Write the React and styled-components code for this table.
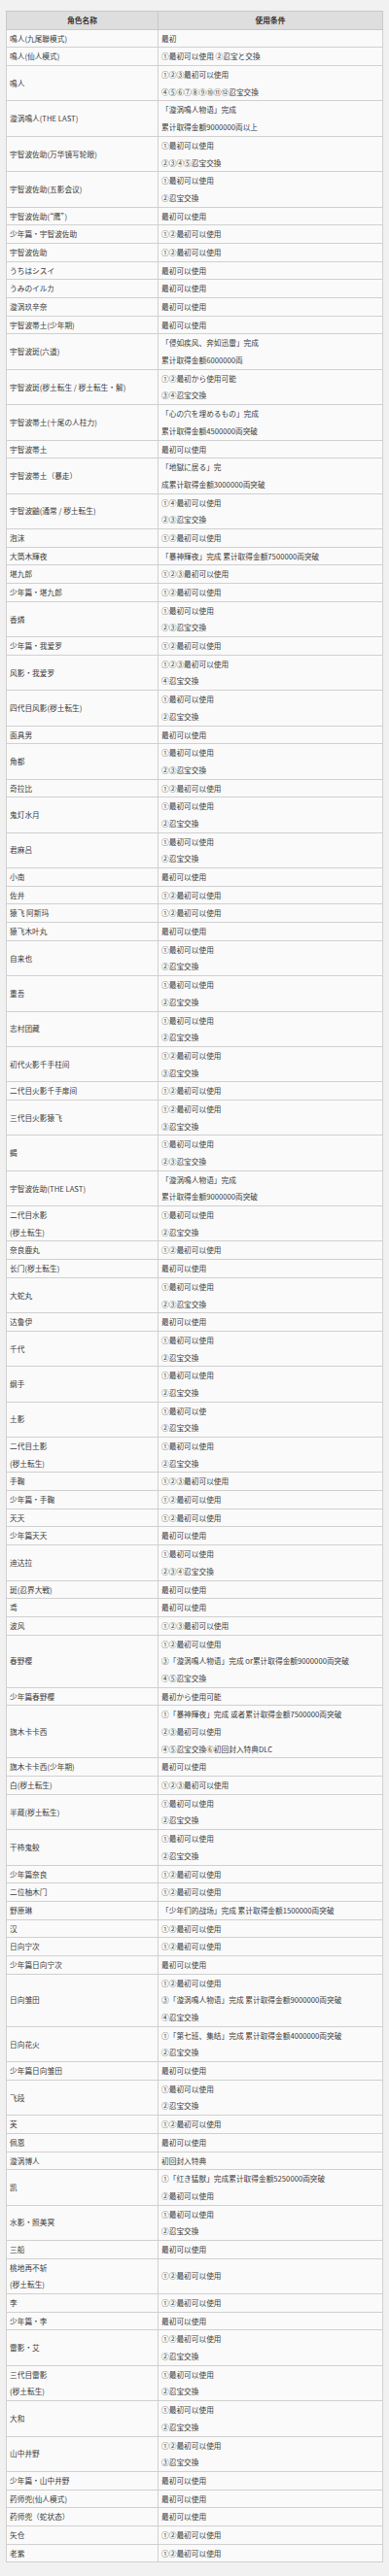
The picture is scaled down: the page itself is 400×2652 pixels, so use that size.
import React from "react";
import styled, { createGlobalStyle } from "styled-components";

const GlobalStyle = createGlobalStyle`
  body {
    margin: 0;
    background: #f1f1f1;
    font-family: "Noto Sans CJK SC", "Noto Sans", sans-serif;
  }
`;

// [角色名称, 使用条件] - "|" splits a cell into lines
const rows = [
  ["鳴人(九尾聯模式)", "最初"],
  ["鳴人(仙人模式)", "①最初可以使用 ②忍宝と交換"],
  ["鳴人", "①②③最初可以使用|④⑤⑥⑦⑧⑨⑩⑪⑫忍宝交換"],
  ["漩涡鳴人(THE LAST)", "「漩涡鳴人物语」完成|累计取得金额9000000両以上"],
  ["宇智波佐助(万华镜写轮眼)", "①最初可以使用|②③④⑤忍宝交換"],
  ["宇智波佐助(五影会议)", "①最初可以使用|②忍宝交換"],
  ["宇智波佐助(“鹰”)", "最初可以使用"],
  ["少年篇・宇智波佐助", "①②最初可以使用"],
  ["宇智波佐助", "①②最初可以使用"],
  ["うちはシスイ", "最初可以使用"],
  ["うみのイルカ", "最初可以使用"],
  ["漩涡玖辛奈", "最初可以使用"],
  ["宇智波帯土(少年期)", "最初可以使用"],
  ["宇智波斑(六道)", "「侵如疾风、奔如迅雷」完成|累计取得金额6000000両"],
  ["宇智波斑(秽土転生 / 秽土転生・解)", "①②最初から使用可能|③④忍宝交換"],
  ["宇智波帯土(十尾の人柱力)", "「心の穴を埋めるもの」完成|累计取得金额4500000両突破"],
  ["宇智波帯土", "最初可以使用"],
  ["宇智波帯土（暴走）", "「地獄に居る」完|成累计取得金额3000000両突破"],
  ["宇智波鼬(通常 / 秽土転生)", "①④最初可以使用|②③忍宝交換"],
  ["泡沫", "①②最初可以使用"],
  ["大筒木輝夜", "「暴神輝夜」完成 累计取得金额7500000両突破"],
  ["堪九郎", "①②③最初可以使用"],
  ["少年篇・堪九郎", "①②最初可以使用"],
  ["香燐", "①最初可以使用|②③忍宝交換"],
  ["少年篇・我爱罗", "①②最初可以使用"],
  ["风影・我爱罗", "①②③最初可以使用|④忍宝交換"],
  ["四代目风影(秽土転生)", "①最初可以使用|②忍宝交換"],
  ["面具男", "最初可以使用"],
  ["角都", "①最初可以使用|②③忍宝交換"],
  ["奇拉比", "①②最初可以使用"],
  ["鬼灯水月", "①最初可以使用|②忍宝交換"],
  ["君麻吕", "①最初可以使用|②忍宝交換"],
  ["小南", "最初可以使用"],
  ["佐井", "①②最初可以使用"],
  ["猿飞 阿斯玛", "①②最初可以使用"],
  ["猿飞木叶丸", "最初可以使用"],
  ["自来也", "①最初可以使用|②忍宝交換"],
  ["重吾", "①最初可以使用|②忍宝交換"],
  ["志村团藏", "①最初可以使用|②忍宝交換"],
  ["初代火影千手柱间", "①②最初可以使用|③忍宝交換"],
  ["二代目火影千手扉间", "①②最初可以使用"],
  ["三代目火影猿飞", "①②最初可以使用|③忍宝交換"],
  ["蝎", "①最初可以使用|②③忍宝交換"],
  ["宇智波佐助(THE LAST)", "「漩涡鳴人物语」完成|累计取得金额9000000両突破"],
  ["二代目水影|(秽土転生)", "①最初可以使用|②忍宝交換"],
  ["奈良鹿丸", "①②最初可以使用"],
  ["长门(秽土転生)", "最初可以使用"],
  ["大蛇丸", "①最初可以使用|②③忍宝交換"],
  ["达鲁伊", "最初可以使用"],
  ["千代", "①最初可以使用|②忍宝交換"],
  ["纲手", "①最初可以使用|②忍宝交換"],
  ["土影", "①最初可以使|②忍宝交換"],
  ["二代目土影|(秽土転生)", "①最初可以使用|②忍宝交換"],
  ["手鞠", "①②③最初可以使用"],
  ["少年篇・手鞠", "①②最初可以使用"],
  ["天天", "①②最初可以使用"],
  ["少年篇天天", "最初可以使用"],
  ["迪达拉", "①最初可以使用|②③④忍宝交換"],
  ["斑(忍界大戦)", "最初可以使用"],
  ["鸢", "最初可以使用"],
  ["波风", "①②③最初可以使用"],
  ["春野樱", "①②最初可以使用|③「漩涡鳴人物语」完成 or累计取得金额9000000両突破|④⑤忍宝交換"],
  ["少年篇春野樱", "最初から使用可能"],
  ["旗木卡卡西", "①「暴神輝夜」完成 或者累计取得金额7500000両突破|②③最初可以使用|④⑤忍宝交換⑥初回封入特典DLC"],
  ["旗木卡卡西(少年期)", "最初可以使用"],
  ["白(秽土転生)", "①②③最初可以使用"],
  ["半蔵(秽土転生)", "①最初可以使用|②忍宝交換"],
  ["干柿鬼鲛", "①最初可以使用|②忍宝交換"],
  ["少年篇奈良", "①②最初可以使用"],
  ["二位柚木门", "①②最初可以使用"],
  ["野原琳", "「少年们的战场」完成 累计取得金额1500000両突破"],
  ["汉", "①②最初可以使用"],
  ["日向宁次", "①②最初可以使用"],
  ["少年篇日向宁次", "最初可以使用"],
  ["日向雏田", "①②最初可以使用|③「漩涡鳴人物语」完成 累计取得金额9000000両突破|④忍宝交換"],
  ["日向花火", "①「第七班、集结」完成 累计取得金额4000000両突破|②忍宝交換"],
  ["少年篇日向雏田", "最初可以使用"],
  ["飞段", "①最初可以使用|②忍宝交換"],
  ["芙", "①②最初可以使用"],
  ["佩恩", "最初可以使用"],
  ["漩涡博人", "初回封入特典"],
  ["凯", "①「红き猛獣」完成累计取得金额5250000両突破|②最初可以使用"],
  ["水影・照美冥", "①最初可以使用|②忍宝交換"],
  ["三船", "最初可以使用"],
  ["桃地再不斩|(秽土転生)", "①②最初可以使用"],
  ["李", "①②最初可以使用"],
  ["少年篇・李", "最初可以使用"],
  ["雷影・艾", "①②最初可以使用|②忍宝交換"],
  ["三代目雷影|(秽土転生)", "①最初可以使用|②忍宝交換"],
  ["大和", "①最初可以使用|②忍宝交換"],
  ["山中井野", "①②最初可以使用|③忍宝交換"],
  ["少年篇・山中井野", "最初可以使用"],
  ["药师兜(仙人模式)", "最初可以使用"],
  ["药师兜（蛇状态）", "最初可以使用"],
  ["矢仓", "①②最初可以使用"],
  ["老紫", "①②最初可以使用"],
];

const Page = styled.div`
  padding: 11px 6px 13px 6px;
`;

const Table = styled.table`
  width: 100%;
  border-collapse: collapse;
  table-layout: fixed;
  border: 1px solid #c9c9c9;
  background: #fafafa;
  color: #3a3a3a;
  font-size: 7.7px;
`;

const HeadCell = styled.th`
  width: ${(p) => p.$w || "auto"};
  height: 17.7px;
  padding: 0 3px;
  background: #dedede;
  border: 1px solid #c9c9c9;
  font-weight: bold;
  text-align: center;
  line-height: 17.7px;
  color: #333;
`;

const Cell = styled.td`
  padding: 0 3px;
  border: 1px solid #d0d0d0;
  vertical-align: middle;
  text-align: left;
  white-space: nowrap;
  overflow: hidden;
`;

const Line = styled.div`
  line-height: 17.7px;
  height: 17.7px;
`;

const Lines = ({ text }) => (
  <>
    {text.split("|").map((t, i) => (
      <Line key={i}>{t}</Line>
    ))}
  </>
);

const App = () => {
  return (
    <Page>
      <GlobalStyle />
      <Table>
        <thead>
          <tr>
            <HeadCell $w="149px">角色名称</HeadCell>
            <HeadCell>使用条件</HeadCell>
          </tr>
        </thead>
        <tbody>
          {rows.map(([name, cond], i) => (
            <tr key={i}>
              <Cell>
                <Lines text={name} />
              </Cell>
              <Cell>
                <Lines text={cond} />
              </Cell>
            </tr>
          ))}
        </tbody>
      </Table>
    </Page>
  );
};

export default App;
